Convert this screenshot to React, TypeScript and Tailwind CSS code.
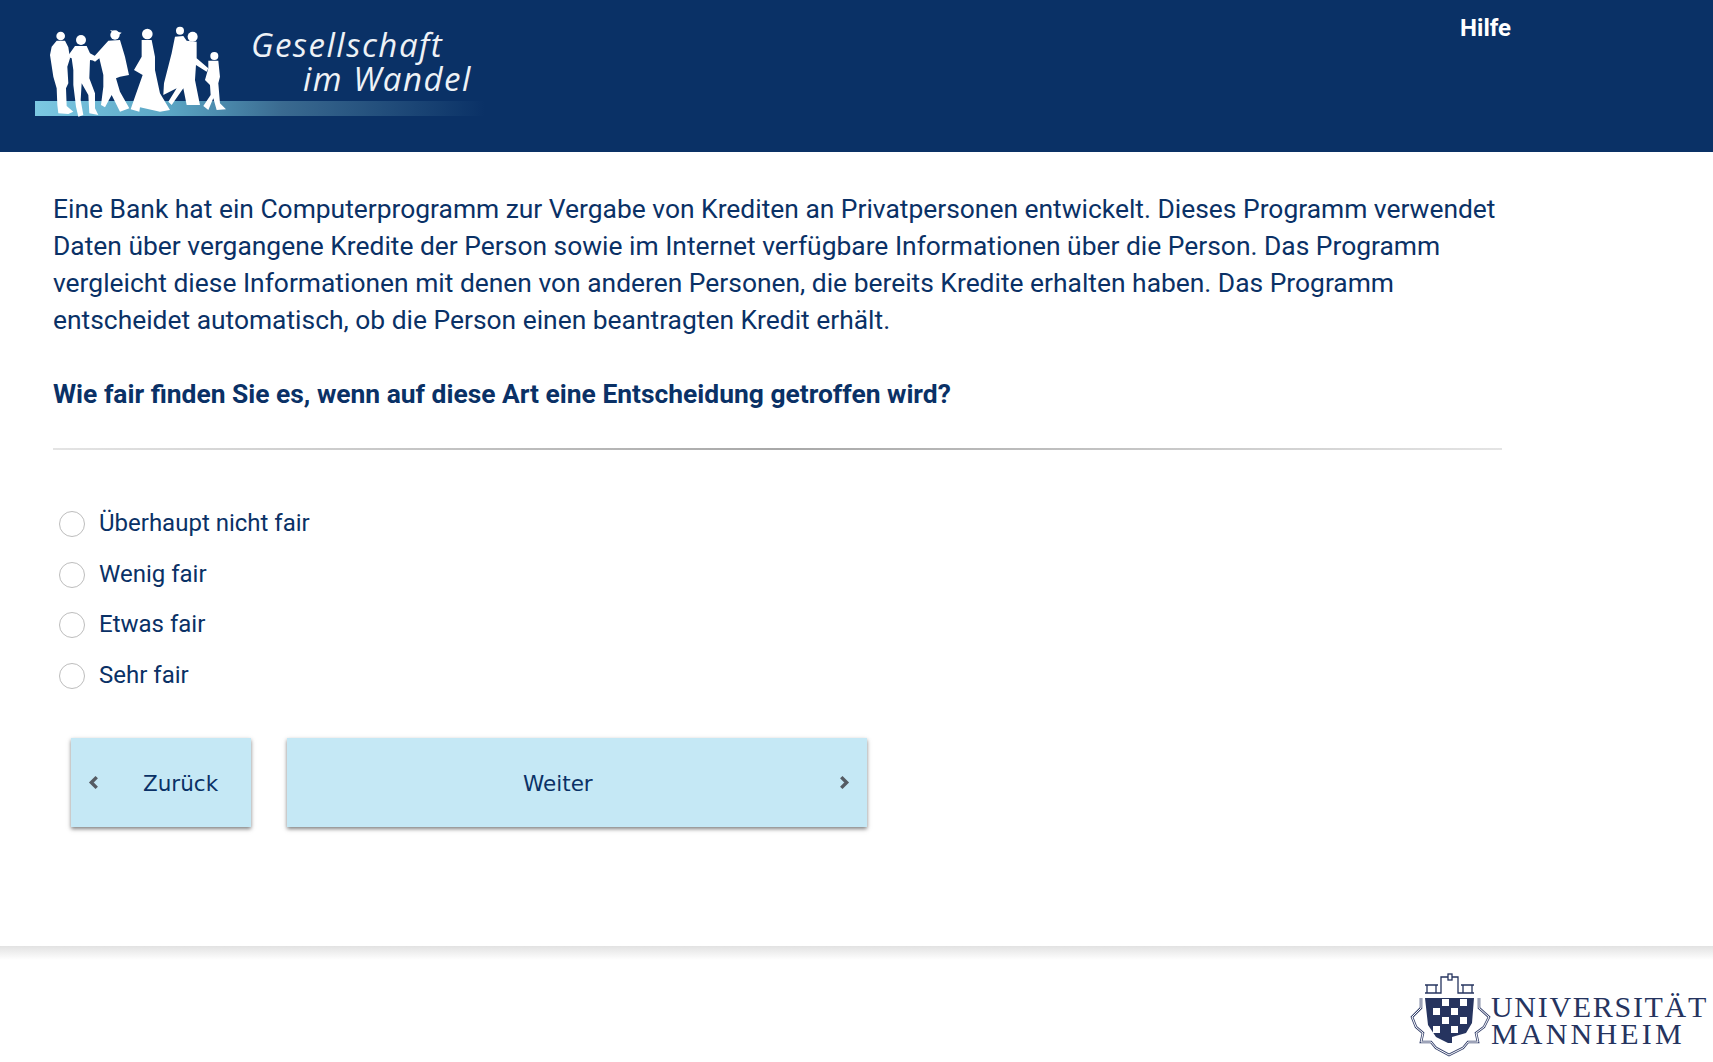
import React from "react";

const answers = ["Überhaupt nicht fair", "Wenig fair", "Etwas fair", "Sehr fair"];

function SiteLogo() {
  return (
    <div className="relative h-[118px] w-[450px] shrink-0">
      <svg viewBox="0 0 450 118" className="absolute inset-0 h-full w-full">
        <defs>
          <linearGradient id="band" x1="0" x2="1" y1="0" y2="0">
            <stop offset="0" stopColor="#7cc8e2" />
            <stop offset="0.3" stopColor="#5aa5c4" />
            <stop offset="0.55" stopColor="#3a6a90" />
            <stop offset="1" stopColor="#0a3166" />
          </linearGradient>
        </defs>
        <rect x="0" y="89" width="450" height="15" fill="url(#band)" />
        {/* walking people, traced at 3x */}
        <g fill="#ffffff" transform="translate(5 8) scale(0.3333)">
          <circle cx="62" cy="48" r="13" />
          <path d="M50 62 L75 62 L85 82 L90 115 L82 140 L85 190 L78 205 L80 258 L100 275 L85 282 L55 280 L52 255 L50 205 L40 170 L30 105 L35 80 Z" />
          <circle cx="123" cy="60" r="15" />
          <path d="M105 78 L140 78 L150 100 L172 112 L165 122 L150 120 L148 175 L165 220 L165 265 L175 285 L148 280 L145 225 L125 190 L122 240 L130 285 L115 290 L108 260 L100 195 L100 150 L95 115 L82 110 Z" />
          <circle cx="225" cy="45" r="14" />
          <path d="M210 30 L245 38 L230 50 Z" />
          <path d="M205 62 L240 60 L255 110 L267 165 L240 170 L228 175 L240 215 L268 265 L240 275 L215 225 L195 262 L183 255 L190 200 L190 165 L178 115 L165 125 L155 118 Z" />
          <circle cx="322" cy="42" r="16" />
          <path d="M305 60 L335 60 L345 110 L345 150 L360 220 L390 270 L360 275 L300 262 L298 275 L272 268 L285 230 L308 165 L282 150 L305 110 Z" />
          <circle cx="420" cy="32" r="12" />
          <circle cx="458" cy="50" r="15" />
          <path d="M405 50 L430 48 L440 62 L470 65 L470 115 L505 145 L500 155 L468 135 L465 180 L480 255 L440 255 L430 205 L395 255 L385 245 L410 205 L370 225 L372 190 L395 100 Z" />
          <circle cx="523" cy="108" r="12" />
          <path d="M505 122 L535 122 L540 170 L535 190 L540 250 L558 268 L530 270 L520 235 L505 270 L490 258 L512 225 L510 195 L495 180 L505 145 Z" />
        </g>
      </svg>
      <div className="absolute left-[216px] top-[16px] font-['Open_Sans',sans-serif] text-[33px] leading-[34px] tracking-[1.5px] text-[#eef2f6] italic">
        <div>Gesellschaft</div>
        <div className="pl-[52px]">im Wandel</div>
      </div>
    </div>
  );
}

const whiteCells = [
  [36, 34], [54, 34],
  [27, 43], [45, 43],
  [36, 52], [54, 52],
  [27, 61], [45, 61],
];

function UniLogo() {
  return (
    <div className="flex w-[307px] items-start">
      <svg viewBox="0 0 85 97" className="h-[97px] w-[85px] shrink-0">
        <g fill="none" stroke="#26345f" strokeWidth="1.3">
          <path d="M19 20 H32 M21 20 V28 M30 20 V28 M19 28 H35 V12 H42 M46 12 H52 V28 H68 M55 20 H68 M57 20 V28 M66 20 V28" />
          <rect x="42" y="9" width="4" height="6" />
        </g>
        <path
          fill="none"
          stroke="#3a4670"
          strokeWidth="2.6"
          d="M15 33 V43 L6 52 L10 62 L17 68 L15 77 L25 77 L30 83 L43 90 L57 83 L62 77 L72 77 L70 68 L78 62 L83 52 L73 43 V33"
        />
        <path
          fill="none"
          stroke="#ffffff"
          strokeWidth="1"
          d="M15 33 V43 L6 52 L10 62 L17 68 L15 77 L25 77 L30 83 L43 90 L57 83 L62 77 L72 77 L70 68 L78 62 L83 52 L73 43 V33"
        />
        <path fill="#26345f" d="M19 33 H68 L66 58 L60 68 L46 72 V78 L42 78 L30 72 L22 60 Z" />
        <g fill="#ffffff">
          {whiteCells.map(([x, y]) => (
            <rect key={`${x}-${y}`} x={x} y={y} width="7" height="7" />
          ))}
        </g>
      </svg>
      <div className="pt-[28px] font-['Liberation_Serif',serif] text-[30px] leading-[27px] text-[#26345f]">
        <div className="tracking-[1.7px]">UNIVERSITÄT</div>
        <div className="tracking-[3.2px]">MANNHEIM</div>
      </div>
    </div>
  );
}

function Chevron({ dir }: { dir: "left" | "right" }) {
  return (
    <svg viewBox="0 0 10 14" className="h-[15px] w-[11px] shrink-0" fill="none" stroke="#555b63" strokeWidth="3.2">
      <path d={dir === "left" ? "M8 2 L3 7 L8 12" : "M2 2 L7 7 L2 12"} />
    </svg>
  );
}

export default function App() {
  return (
    <div className="flex min-h-[1062px] flex-col bg-white font-['Roboto',sans-serif] text-[#0a3166]">
      <header className="flex h-[152px] items-start justify-between bg-[#0a3166] pt-[12px] pr-[202px] pl-[35px]">
        <SiteLogo />
        <a className="pt-[2px] text-[24px] leading-[28px] font-bold text-white">Hilfe</a>
      </header>

      <main className="flex-1 pt-[39px] pl-[53px]">
        <div className="w-[1449px]">
          <p className="text-[26.4px] leading-[37px]">
            Eine Bank hat ein Computerprogramm zur Vergabe von Krediten an Privatpersonen entwickelt. Dieses Programm verwendet Daten über vergangene Kredite der Person sowie im Internet verfügbare Informationen über die Person. Das Programm vergleicht diese Informationen mit denen von anderen Personen, die bereits Kredite erhalten haben. Das Programm entscheidet automatisch, ob die Person einen beantragten Kredit erhält.
          </p>
          <p className="mt-[37px] text-[26.4px] leading-[37px] font-bold">
            Wie fair finden Sie es, wenn auf diese Art eine Entscheidung getroffen wird?
          </p>
          <div className="mt-[35px] h-[2px] bg-gradient-to-r from-[#e4e4e4] via-[#a8a8a8] to-[#e4e4e4]" />

          <div className="mt-[60px] flex flex-col gap-[22.7px] pl-[6px]">
            {answers.map((a) => (
              <label key={a} className="flex h-[28px] items-center gap-[14px] text-[24px]">
                <span className="h-[26px] w-[26px] rounded-full border border-[#bdbdbd] bg-white" />
                <span className="-mt-[2px]">{a}</span>
              </label>
            ))}
          </div>

          <div className="mt-[48px] flex gap-[36px] pl-[18px] font-['DejaVu_Sans',sans-serif] text-[21.5px]">
            <button className="flex h-[89px] w-[180px] items-center bg-[#c5e8f5] pl-[17px] shadow-[0_2px_4px_rgba(0,0,0,0.5)]">
              <Chevron dir="left" />
              <span className="ml-[44px] pt-[4px]">Zurück</span>
            </button>
            <button className="flex h-[89px] w-[580px] items-center justify-between bg-[#c5e8f5] pr-[17px] pl-[236px] shadow-[0_2px_4px_rgba(0,0,0,0.5)]">
              <span className="pt-[4px]">Weiter</span>
              <Chevron dir="right" />
            </button>
          </div>
        </div>
      </main>

      <footer className="flex h-[116px] flex-col">
        <div className="h-[14px] bg-gradient-to-b from-[#e2e2e2] to-white" />
        <div className="flex justify-end pt-[5px]">
          <UniLogo />
        </div>
      </footer>
    </div>
  );
}
